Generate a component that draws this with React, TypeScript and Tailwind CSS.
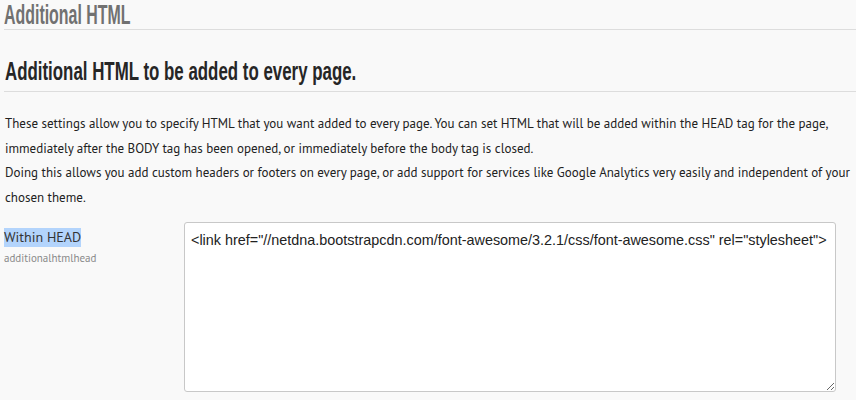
import React from "react";

export default function App() {
  const body = { fontFamily: '"PT Sans", Lato, "Open Sans", sans-serif' };
  const head = { fontFamily: '"Liberation Sans", Arial, sans-serif' };
  return (
    <div className="w-[856px] h-[400px] overflow-hidden bg-[#f9f9f9]">
      <div className="pl-[4px]">
        <h2 className="text-[#717171] text-[27px] leading-[28px] pt-[1px] font-bold whitespace-nowrap" style={head}>
          <span className="inline-block origin-left scale-x-[0.59]">Additional HTML</span>
        </h2>
        <div className="h-px bg-[#dddddd]" />
        <h3 className="text-[#262626] text-[25px] leading-[30px] mt-[26px] font-bold whitespace-nowrap pl-px" style={head}>
          <span className="inline-block origin-left scale-x-[0.675]">Additional HTML to be added to every page.</span>
        </h3>
        <div className="h-px bg-[#dddddd] mt-[5px]" />
        <div className="text-[#222] text-[13px] leading-[24.5px] mt-[20px] pl-px" style={body}>
          <p>
            These settings allow you to specify HTML that you want added to every page. You can set HTML that will be added within the HEAD tag for the page,
            <br />
            immediately after the BODY tag has been opened, or immediately before the body tag is closed.
          </p>
          <p>
            Doing this allows you add custom headers or footers on every page, or add support for services like Google Analytics very easily and independent of your
            <br />
            chosen theme.
          </p>
        </div>
        <div className="flex mt-[12px]">
          <div className="w-[180px] pt-[2px]" style={body}>
            <div>
              <span className="bg-[#b3d4fc] text-[#333] text-[14px] leading-[19px] inline-block">Within HEAD</span>
            </div>
            <div className="text-[#8a8a8a] text-[11px] mt-[2px]">additionalhtmlhead</div>
          </div>
          <textarea
            className="w-[652px] h-[170px] bg-white border border-[#c8c8c8] rounded-[3px] px-[6px] pt-[7px] text-[14.4px] leading-[20px] text-[#222] outline-none"
            style={{ fontFamily: '"Liberation Sans", Arial, sans-serif' }}
            defaultValue={'<link href="//netdna.bootstrapcdn.com/font-awesome/3.2.1/css/font-awesome.css" rel="stylesheet">'}
          />
        </div>
      </div>
    </div>
  );
}
